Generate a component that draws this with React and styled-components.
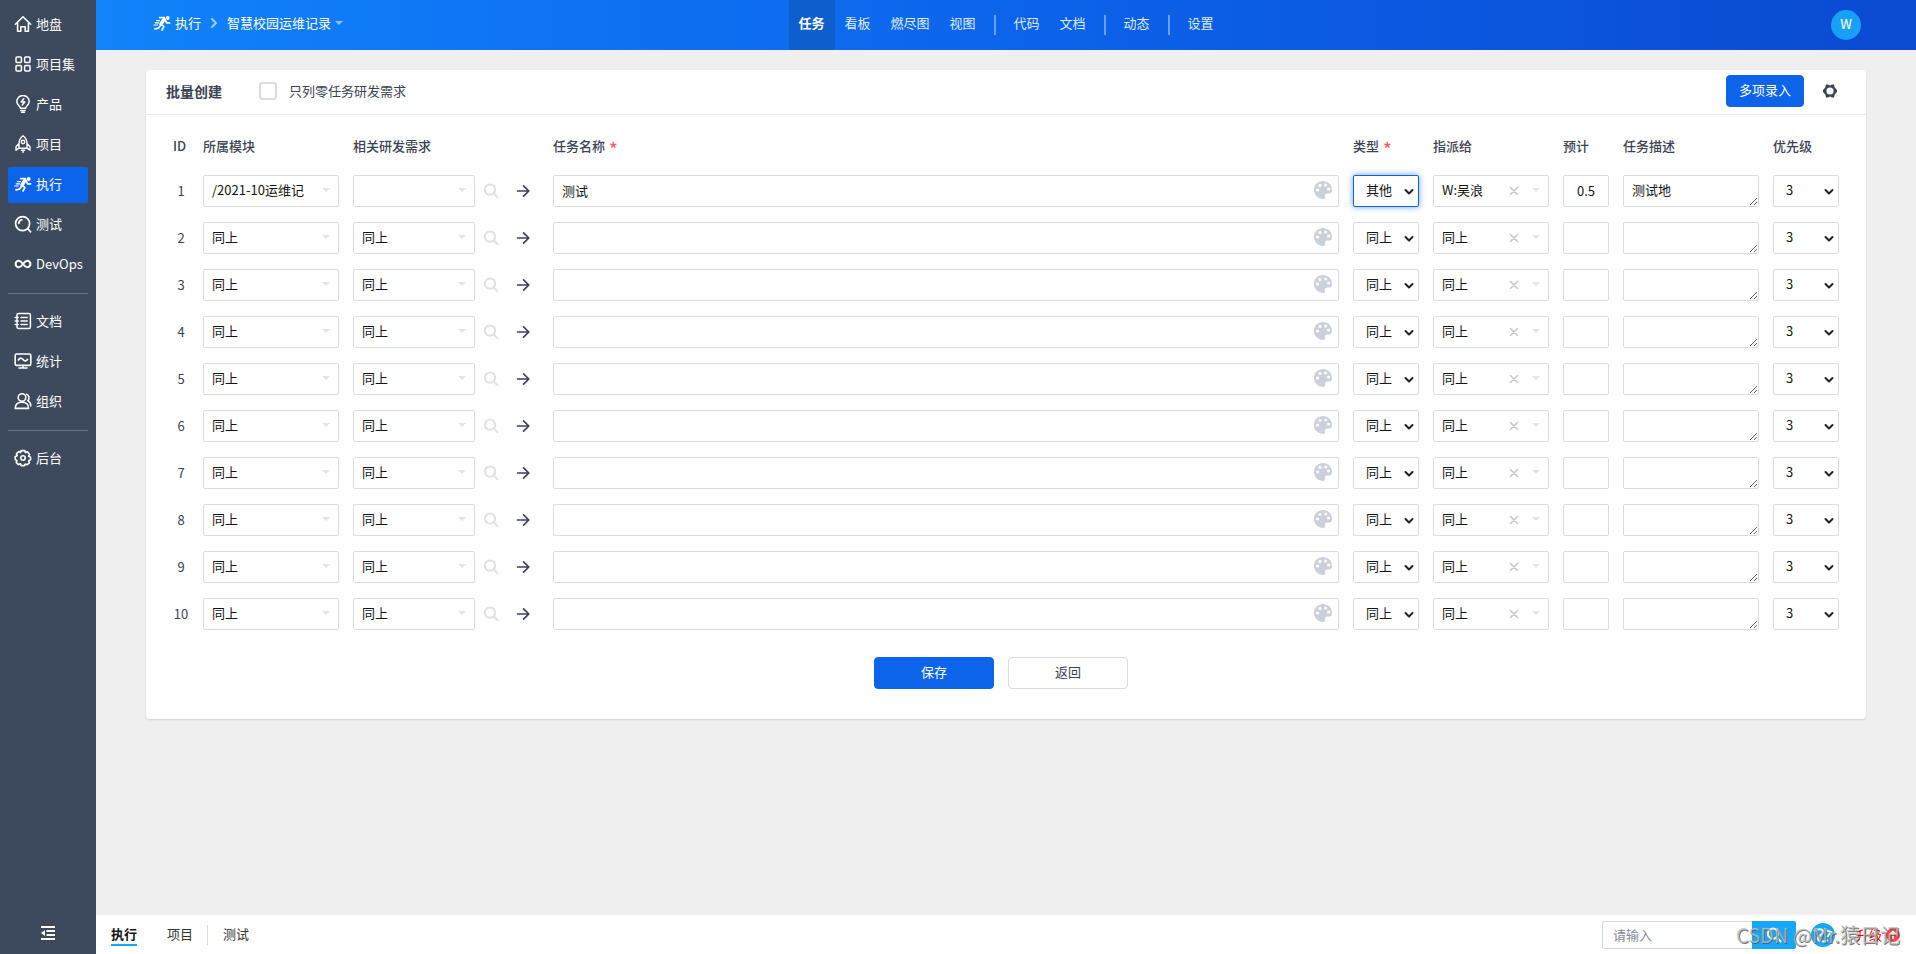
import React from 'react';
import styled, { createGlobalStyle, css } from 'styled-components';

const Global = createGlobalStyle`
  *, *::before, *::after { box-sizing: border-box; }
  body {
    margin: 0;
    background: #efefef;
    color: #3c4353;
    font: 13px/20px "Noto Sans CJK SC", sans-serif;
  }
  a { color: inherit; text-decoration: none; }
  button, input, select, textarea { font: inherit; color: #141414; margin: 0; }
`;

const Layout = styled.div`
  display: flex;
  min-height: 100vh;
`;

const Sidebar = styled.nav`
  flex: 0 0 96px;
  display: flex;
  flex-direction: column;
  justify-content: space-between;
  background: #3d4a5d;
  color: #fff;
`;

const Menu = styled.ul`
  list-style: none;
  margin: 0;
  padding: 7px 8px;
`;

const MenuItem = styled.li`
  margin-bottom: 4px;
`;

const MenuLink = styled.a`
  display: flex;
  align-items: center;
  gap: 4px;
  height: 36px;
  padding: 0 0 2px 6px;
  border-radius: 2px;
  white-space: nowrap;
  background: ${(p) => (p.$active ? '#0c64eb' : 'transparent')};
`;

const Divider = styled.li`
  height: 1px;
  margin: 10px 0;
  background: #6b7583;
`;

const CollapseButton = styled.button`
  display: flex;
  align-items: center;
  justify-content: center;
  height: 42px;
  border: 0;
  background: none;
  && { color: #fff; }
`;

const Page = styled.div`
  flex: 1;
  min-width: 0;
  display: flex;
  flex-direction: column;
`;

const Header = styled.header`
  display: grid;
  grid-template-columns: 1fr auto 1fr;
  height: 50px;
  padding: 0 55px 0 57px;
  color: #fff;
  background: linear-gradient(90deg, #1183fb 0%, #0c64eb 50%, #0b4ad2 100%);
`;

const Crumbs = styled.div`
  display: flex;
  align-items: center;
  padding-bottom: 4px;
`;

const Crumb = styled.a`
  display: flex;
  align-items: center;
  gap: 4px;
  white-space: nowrap;
`;

const CrumbArrow = styled.span`
  display: flex;
  margin: 0 7px;
  color: #a4cdff;
`;

const CrumbCaret = styled.span`
  display: flex;
  color: #8fc0fd;
`;

const Tabs = styled.nav`
  display: flex;
  align-items: center;
`;

const Tab = styled.a`
  height: 50px;
  padding: 0 11px 0 9px;
  line-height: 46px;
  color: ${(p) => (p.$active ? '#fff' : '#dfebfd')};
  font-weight: ${(p) => (p.$active ? 700 : 400)};
  background: ${(p) => (p.$active ? '#0c5fcc' : 'transparent')};
`;

const TabDivider = styled.span`
  width: 2px;
  height: 20px;
  margin: 0 9px 0 7px;
  background: #6aa0f4;
`;

const AvatarArea = styled.div`
  display: flex;
  align-items: center;
  justify-content: flex-end;
`;

const Avatar = styled.button`
  width: 30px;
  height: 30px;
  padding: 0 0 2px;
  border: 0;
  border-radius: 50%;
  background: #16a0f6;
  && { color: #e6f5ff; font-weight: 500; }
`;

const Main = styled.main`
  flex: 1;
  padding: 20px 50px;
`;

const Card = styled.form`
  border-radius: 4px;
  background: #fff;
  box-shadow: 0 1px 2px rgba(0, 0, 0, 0.12);
`;

const CardHeader = styled.div`
  display: flex;
  align-items: center;
  height: 45px;
  padding: 0 29px 2px 20px;
  border-bottom: 1px solid #eaeaea;
`;

const Title = styled.h1`
  margin: 0 37px 0 0;
  font-size: 14px;
  line-height: 20px;
  font-weight: 700;
`;

const CheckLabel = styled.label`
  display: flex;
  align-items: center;
  gap: 12px;
  flex: 1;
`;

const Checkbox = styled.input`
  appearance: none;
  width: 18px;
  height: 18px;
  border: 2px solid #dcdcdc;
  border-radius: 3px;
  background: #fff;
`;

const Button = styled.button`
  width: ${(p) => p.$width}px;
  height: 32px;
  padding: 0 0 2px;
  border: 1px solid ${(p) => (p.$primary ? '#0c64eb' : '#d8dbe3')};
  border-radius: 4px;
  background: ${(p) => (p.$primary ? '#0c64eb' : '#fff')};
  && { color: ${(p) => (p.$primary ? '#fff' : '#3c4353')}; }
`;

const IconButton = styled.button`
  display: flex;
  align-items: center;
  justify-content: center;
  padding: 0;
  border: 0;
  background: none;
  && { color: ${(p) => p.$color || '#3c4353'}; }
`;

const SettingsSlot = styled.div`
  margin-left: 19px;
`;

const CardBody = styled.div`
  padding: 15px 20px 30px;
`;

const Table = styled.table`
  width: 100%;
  table-layout: fixed;
  border-collapse: collapse;
`;

const Col = styled.col`
  width: ${(p) => (p.$width ? `${p.$width}px` : 'auto')};
`;

const Th = styled.th`
  height: 37px;
  padding: 0 7px 6px;
  text-align: left;
  font-weight: 500;
  white-space: nowrap;
`;

const Required = styled.span`
  margin-left: 4px;
  color: #ff5d5d;
  font-size: 18px;
  line-height: 16px;
  vertical-align: -5px;
`;

const Td = styled.td`
  height: 47px;
  padding: 0 7px;
  vertical-align: middle;
`;

const IdCell = styled(Td)`
  padding: 0;
  text-align: center;
`;

const field = css`
  display: block;
  width: 100%;
  height: 32px;
  border: 1px solid #dcdcdc;
  border-radius: 2px;
  background: #fff;
  outline: 0;
`;

const Input = styled.input`
  ${field}
  padding: 0 ${(p) => (p.$center ? 0 : 8)}px;
  text-align: ${(p) => (p.$center ? 'center' : 'left')};
`;

const TextArea = styled.textarea`
  ${field}
  padding: 4px 8px;
  resize: vertical;
  overflow: hidden;
`;

const Select = styled.select`
  ${field}
  appearance: none;
  padding: 0 ${(p) => (p.$native ? 16 : 24)}px 1px ${(p) => (p.$native ? 12 : 8)}px;
  ${(p) =>
    p.$focused &&
    css`
      border-color: #0c64eb;
      box-shadow: 0 0 6px rgba(12, 100, 235, 0.6);
    `}
`;

const Control = styled.div`
  position: relative;
  flex: 1;
  min-width: 0;
`;

const Adornment = styled.span`
  position: absolute;
  top: 0;
  right: ${(p) => p.$right}px;
  display: flex;
  align-items: center;
  gap: 13px;
  height: ${(p) => (p.$low ? 34 : 30)}px;
  color: ${(p) => p.$color};
  pointer-events: none;
`;

const ClearMark = styled.span`
  display: flex;
  padding-top: 2px;
  color: #c8c8c8;
`;

const StoryCell = styled.div`
  display: flex;
  align-items: center;
`;

const StoryActions = styled.div`
  flex: 0 0 64px;
  display: flex;
  gap: 17px;
  padding-left: 8px;
`;

const Actions = styled.div`
  display: flex;
  justify-content: center;
  gap: 14px;
  padding: 20px 10px 0 0;
`;

const Footer = styled.footer`
  display: flex;
  align-items: center;
  justify-content: space-between;
  height: 39px;
  padding: 0 16px 0 15px;
  background: #fff;
`;

const FooterLinks = styled.nav`
  display: flex;
  align-items: center;
`;

const FooterLink = styled.a`
  border-bottom: 2px solid ${(p) => (p.$active ? '#16a8f8' : 'transparent')};
  color: ${(p) => (p.$active ? '#141414' : '#333')};
  font-weight: ${(p) => (p.$active ? 700 : 400)};

  & + & {
    margin-left: 30px;
    position: relative;
  }
  & + &::before {
    content: '';
    position: absolute;
    left: -16px;
    top: 1px;
    width: 1px;
    height: 20px;
    background: #d8dbe0;
  }
`;

const FooterTools = styled.div`
  position: relative;
  display: flex;
  align-items: center;
`;

const SearchInput = styled.input`
  width: 150px;
  height: 28px;
  padding: 0 10px;
  border: 1px solid #d8d8d8;
  border-right: 0;
  border-radius: 2px 0 0 2px;
  outline: 0;
  &::placeholder { color: #838a9d; opacity: 1; }
`;

const SearchButton = styled.button`
  display: flex;
  align-items: center;
  justify-content: center;
  width: 44px;
  height: 28px;
  padding: 0;
  border: 0;
  border-radius: 0 2px 2px 0;
  background: #16a8f8;
  && { color: #fff; }
`;

const Logo = styled.span`
  display: flex;
  margin: 0 21px 0 15px;
`;

const Upgrade = styled.a`
  display: flex;
  align-items: center;
  gap: 4px;
  color: #f00;
`;

const Watermark = styled.span`
  position: absolute;
  right: 0;
  top: 0;
  color: rgba(190, 190, 190, 0.8);
  font-size: 20px;
  line-height: 28px;
  text-shadow: 1px 1px 0 rgba(80, 80, 80, 0.75);
  white-space: nowrap;
  pointer-events: none;
`;

const Svg = ({ size = 18, sw = 1.6, children }) => (
  <svg width={size} height={size} viewBox={`0 0 ${size} ${size}`} fill="none" stroke="currentColor" strokeWidth={sw} strokeLinecap="round" strokeLinejoin="round" aria-hidden="true">
    {children}
  </svg>
);

const RunIcon = () => (
  <Svg sw={1.7}>
    <circle cx="14.6" cy="4" r="2" fill="currentColor" stroke="none" />
    <path d="M6.6 3.600h4.600M12 5.400l1.600 3.400h3M8.600 10.400l2.200 2.200-1.800 3.400M7.400 11.400l-2 2.800-3.400.6" />
    <path d="M11 5.600 8 10" strokeWidth="3.600" />
    <path d="M3.600 6.600h3M2.200 8.800h3.400M.8 11h3.600" strokeWidth="1.200" />
  </Svg>
);

const icons = {
  home: <Svg><path d="M1.4 9.2 9 1.8l7.600 7.400M3.600 8v8.200h3.200v-4.400h4.400v4.400h3.200V8" /></Svg>,
  grid: (
    <Svg sw={1.5}>
      <rect x="2" y="2" width="5.4" height="5.4" rx="1" /><rect x="10.6" y="2" width="5.4" height="5.4" rx="1" />
      <rect x="2" y="10.6" width="5.4" height="5.4" rx="1" /><rect x="10.6" y="10.6" width="5.4" height="5.4" rx="1" />
    </Svg>
  ),
  bulb: (
    <Svg sw={1.5}>
      <path d="M6.4 13.2C6.4 11 2.8 10 2.8 6.6a6.2 6.2 0 0 1 12.4 0c0 3.4-3.6 4.4-3.6 6.6zM6.8 15.4h4.4M7.6 17.2h2.8" />
      <path d="M9.8 3.8 7.2 7h3.6L8.2 10" />
    </Svg>
  ),
  rocket: (
    <Svg sw={1.4}>
      <path d="M9 .8C6.2 3 5 5.4 5 8.6v4.6h8V8.6C13 5.4 11.8 3 9 .8zM5 8.400l-3 3.400v3.400l3-2M13 8.400l3 3.400v3.400l-3-2M7.400 15.200h3.200M9 15.200v2.200" />
      <circle cx="9" cy="7" r="1.7" />
    </Svg>
  ),
  run: <RunIcon />,
  test: <Svg sw={1.7}><circle cx="8.6" cy="8.6" r="7" /><path d="M14 14l2.600 2.800M4.800 8.400a4 4 0 0 1 3-3.600" /></Svg>,
  devops: <Svg sw={2}><path d="M9 9C7.600 7 6.600 5.800 4.800 5.800a3.200 3.200 0 0 0 0 6.400C6.600 12.200 7.600 11 9 9s2.400-3.200 4.200-3.200a3.200 3.200 0 0 1 0 6.400C11.400 12.200 10.400 11 9 9z" /></Svg>,
  doc: <Svg sw={1.5}><rect x="3" y="1.4" width="13.4" height="15.2" rx="1.6" /><path d="M7 5.400h6.200M7 9h6.200M7 12.600h6.200M1.200 5.400h3M1.200 9h3M1.200 12.600h3" /></Svg>,
  chart: <Svg><rect x="1.2" y="2" width="15.6" height="11.4" rx="1.4" /><path d="M4.400 8c1.800-2.400 3-2.400 4.600-.4s2.800 1.800 4.600-.2M5 16h8M9 13.400V16" /></Svg>,
  org: <Svg><circle cx="8" cy="5.6" r="3.8" /><path d="M1.200 16.400c0-4 2.400-6.200 6.800-6.200s6.600 2.200 6.600 6.200zM12.400 2.200a3.800 3.800 0 0 1 1.400 6.400c2 1 3 2.800 3 5.400" /></Svg>,
  admin: (
    <Svg>
      <path d="M7.2 1.600h3.600l.6 2 2-.8 2.200 2.600-1 1.800 2 1v2.600l-2 1 .8 2-2.400 2-1.800-.8-.8 1.600H7.200l-.8-1.800-2 .8-2.200-2.200.8-2-1.800-.8V7.600l2-.8-.8-2 2.200-2.200 2 .8z" />
      <circle cx="9" cy="9" r="2.2" />
    </Svg>
  ),
};

const Caret = () => (
  <svg width="8" height="4" viewBox="0 0 8 4" aria-hidden="true"><path d="M0 0h8L4 4z" fill="currentColor" /></svg>
);
const Chevron = () => <Svg size={10} sw={2}><path d="M1.500 3 5 6.500 8.500 3" /></Svg>;
const SearchIcon = () => <Svg size={16} sw={2}><circle cx="7" cy="6.6" r="5.2" /><path d="M11 10.800l3.600 3.600" /></Svg>;
const ArrowIcon = () => <Svg size={14} sw={1.7}><path d="M1.600 7h11M7.600 1.800 12.800 7l-5.200 5.200" /></Svg>;
const CrossIcon = () => <Svg size={10} sw={1.6}><path d="M1.500 1.500l7 7M8.500 1.500l-7 7" /></Svg>;
const PaletteIcon = () => (
  <svg width="18" height="18" viewBox="0 0 18 18" aria-hidden="true">
    <path fill="currentColor" fillRule="evenodd" d="M9 0C4 0 0 3.800 0 8.800 0 14 4.200 18 9.400 18c1.400 0 2-1 1.600-2.200-.6-2 .2-3.400 2.400-3.400h2c1.800 0 2.600-1.400 2.600-3.400C18 3.800 14 0 9 0zM3.600 10.600a1.600 1.600 0 1 1 0-3.200 1.600 1.600 0 0 1 0 3.200zM6 6a1.600 1.600 0 1 1 0-3.200A1.600 1.600 0 0 1 6 6zm5.600-.4a1.600 1.600 0 1 1 0-3.200 1.600 1.600 0 0 1 0 3.200zm3 4a1.600 1.600 0 1 1 0-3.200 1.600 1.600 0 0 1 0 3.200z" />
  </svg>
);
const GearIcon = () => (
  <svg width="14" height="14" viewBox="0 0 14 14" aria-hidden="true">
    <path fill="currentColor" fillRule="evenodd" d="M3 .6h2L7 1.600l2-1h2l.7 2.800L14 6v2l-2.300 2.600-.7 2.800H9l-2-1-2 1H3l-.7-2.800L0 8V6l2.300-2.600zM7 3.400a3.600 3.600 0 1 0 0 7.200 3.600 3.600 0 0 0 0-7.200z" />
  </svg>
);

const groups = [
  [['home', '地盘'], ['grid', '项目集'], ['bulb', '产品'], ['rocket', '项目'], ['run', '执行'], ['test', '测试'], ['devops', 'DevOps']],
  [['doc', '文档'], ['chart', '统计'], ['org', '组织']],
  [['admin', '后台']],
];

const tabs = [['任务', '看板', '燃尽图', '视图'], ['代码', '文档'], ['动态'], ['设置']];

const columns = [
  { label: 'ID', width: 30 },
  { label: '所属模块', width: 150 },
  { label: '相关研发需求', width: 200 },
  { label: '任务名称', required: true },
  { label: '类型', width: 80, required: true },
  { label: '指派给', width: 130 },
  { label: '预计', width: 60 },
  { label: '任务描述', width: 150 },
  { label: '优先级', width: 80 },
];

const ditto = { module: '同上', story: '同上', name: '', type: '同上', user: '同上', estimate: '', desc: '' };
const rows = Array.from({ length: 10 }, (_, i) =>
  i === 0
    ? { module: '/2021-10运维记', story: '', name: '测试', type: '其他', user: 'W:吴浪', estimate: '0.5', desc: '测试地' }
    : ditto
);

function Picker({ label, value, native, focused, clearable }) {
  return (
    <Control>
      <Select aria-label={label} defaultValue={value} $native={native} $focused={focused}>
        <option>{value}</option>
      </Select>
      <Adornment $right={native ? 5 : 9} $low={native} $color={native ? '#222' : '#e1e3ea'}>
        {clearable && <ClearMark><CrossIcon /></ClearMark>}
        {native ? <Chevron /> : <Caret />}
      </Adornment>
    </Control>
  );
}

function TaskRow({ id, row }) {
  return (
    <tr>
      <IdCell>{id}</IdCell>
      <Td><Picker label="所属模块" value={row.module} /></Td>
      <Td>
        <StoryCell>
          <Picker label="相关研发需求" value={row.story} />
          <StoryActions>
            <IconButton type="button" $color="#e2e2e2" aria-label="查看"><SearchIcon /></IconButton>
            <IconButton type="button" aria-label="复制"><ArrowIcon /></IconButton>
          </StoryActions>
        </StoryCell>
      </Td>
      <Td>
        <Control>
          <Input aria-label="任务名称" defaultValue={row.name} />
          <Adornment $right={7} $color="#cbd0db"><PaletteIcon /></Adornment>
        </Control>
      </Td>
      <Td><Picker label="类型" value={row.type} native focused={id === 1} /></Td>
      <Td><Picker label="指派给" value={row.user} clearable /></Td>
      <Td><Input aria-label="预计" defaultValue={row.estimate} $center /></Td>
      <Td><TextArea aria-label="任务描述" rows={1} defaultValue={row.desc} /></Td>
      <Td><Picker label="优先级" value="3" native /></Td>
    </tr>
  );
}

export default function App() {
  return (
    <Layout>
      <Global />
      <Sidebar>
        <Menu>
          {groups.map((group, g) => (
            <React.Fragment key={g}>
              {g > 0 && <Divider />}
              {group.map(([icon, label]) => (
                <MenuItem key={label}>
                  <MenuLink href="#" $active={icon === 'run'}>{icons[icon]}{label}</MenuLink>
                </MenuItem>
              ))}
            </React.Fragment>
          ))}
        </Menu>
        <CollapseButton type="button" aria-label="收起">
          <Svg size={16} sw={2}><path d="M1 2h14M6.500 6H15M6.500 10H15M1 14h14" strokeLinecap="butt" /><path d="M5 5v6L1 8z" fill="currentColor" stroke="none" /></Svg>
        </CollapseButton>
      </Sidebar>
      <Page>
        <Header>
          <Crumbs>
            <Crumb href="#"><RunIcon />执行</Crumb>
            <CrumbArrow><Svg size={12} sw={2}><path d="M4 2l4 4-4 4" /></Svg></CrumbArrow>
            <Crumb href="#">智慧校园运维记录<CrumbCaret><Caret /></CrumbCaret></Crumb>
          </Crumbs>
          <Tabs>
            {tabs.map((group, g) => (
              <React.Fragment key={g}>
                {g > 0 && <TabDivider />}
                {group.map((label) => <Tab key={label} href="#" $active={label === '任务'}>{label}</Tab>)}
              </React.Fragment>
            ))}
          </Tabs>
          <AvatarArea><Avatar type="button">W</Avatar></AvatarArea>
        </Header>
        <Main>
          <Card>
            <CardHeader>
              <Title>批量创建</Title>
              <CheckLabel><Checkbox type="checkbox" />只列零任务研发需求</CheckLabel>
              <Button type="button" $primary $width={78}>多项录入</Button>
              <SettingsSlot><IconButton type="button" aria-label="设置"><GearIcon /></IconButton></SettingsSlot>
            </CardHeader>
            <CardBody>
              <Table>
                <colgroup>{columns.map((c) => <Col key={c.label} $width={c.width} />)}</colgroup>
                <thead>
                  <tr>
                    {columns.map((c) => (
                      <Th key={c.label} scope="col">{c.label}{c.required && <Required>*</Required>}</Th>
                    ))}
                  </tr>
                </thead>
                <tbody>{rows.map((row, i) => <TaskRow key={i} id={i + 1} row={row} />)}</tbody>
              </Table>
              <Actions>
                <Button type="button" $primary $width={120}>保存</Button>
                <Button type="button" $width={120}>返回</Button>
              </Actions>
            </CardBody>
          </Card>
        </Main>
        <Footer>
          <FooterLinks>
            <FooterLink href="#" $active>执行</FooterLink>
            <FooterLink href="#">项目</FooterLink>
            <FooterLink href="#">测试</FooterLink>
          </FooterLinks>
          <FooterTools>
            <SearchInput aria-label="搜索" placeholder="请输入" />
            <SearchButton type="button" aria-label="搜索"><SearchIcon /></SearchButton>
            <Logo>
              <svg width="24" height="24" viewBox="0 0 24 24" aria-hidden="true">
                <circle cx="12" cy="12" r="12" fill="#16a8f8" />
                <path d="M3 8c5-3 9-2 9 1s-6 4-5 7 7 3 10 1M14 7l6 2-4 5" fill="none" stroke="#fff" strokeWidth="2" />
              </svg>
            </Logo>
            <Upgrade href="#">
              升级
              <svg width="14" height="14" viewBox="0 0 14 14" aria-hidden="true">
                <circle cx="7" cy="7" r="7" fill="#f44" />
                <path d="M7 11V4M4 6.500 7 3.500l3 3" fill="none" stroke="#fff" strokeWidth="1.6" />
              </svg>
            </Upgrade>
            <Watermark>CSDN @Mr.猿日记</Watermark>
          </FooterTools>
        </Footer>
      </Page>
    </Layout>
  );
}
